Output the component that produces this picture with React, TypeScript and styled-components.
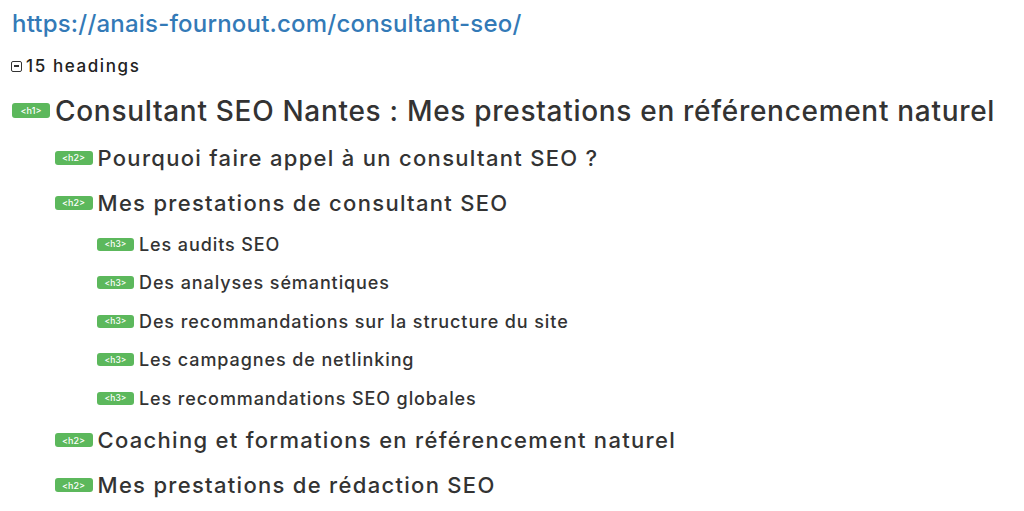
import React from "react";
import styled, { createGlobalStyle } from "styled-components";

const GlobalStyle = createGlobalStyle`
  html, body {
    margin: 0;
    padding: 0;
    background: #fff;
  }
  body {
    font-family: Inter, "Liberation Sans", Arial, sans-serif;
    font-weight: 500;
    color: #333;
  }
`;

const Page = styled.div`
  display: flex;
  flex-direction: column;
  padding: 8px 0 0 12px;
  width: 1024px;
  height: 511px;
  box-sizing: border-box;
  overflow: hidden;
`;

const UrlLink = styled.a`
  display: block;
  font-size: 24px;
  line-height: 32px;
  height: 32px;
  letter-spacing: 0.2px;
  color: #337ab7;
  text-decoration: none;
`;

const Toggle = styled.div`
  display: flex;
  align-items: center;
  gap: 4px;
  height: 40px;
  margin-top: 6px;
  font-size: 17px;
  letter-spacing: 1.6px;
  color: #222;
`;

const ToggleBox = styled.span`
  display: inline-flex;
  align-items: center;
  justify-content: center;
  width: 9px;
  height: 9px;
  border: 1.5px solid #333;
  border-radius: 2px;
  margin-left: -1px;

  &::after {
    content: "";
    width: 5px;
    height: 1.5px;
    background: #333;
  }
`;

const sizes: Record<
  number,
  { font: number; row: number; spacing: number; badgeW: number; badgeH: number; badgeFont: number }
> = {
  1: { font: 28, row: 49, spacing: 0.7, badgeW: 38, badgeH: 15, badgeFont: 9 },
  2: { font: 22, row: 45, spacing: 1.3, badgeW: 38, badgeH: 14, badgeFont: 9 },
  3: { font: 18, row: 38.5, spacing: 0.9, badgeW: 37, badgeH: 13, badgeFont: 8.5 },
};

const Row = styled.div<{ $level: number }>`
  display: flex;
  align-items: center;
  height: ${(p) => sizes[p.$level].row}px;
  padding-left: ${(p) => (p.$level - 1) * 42.5}px;
  font-size: ${(p) => sizes[p.$level].font}px;
  letter-spacing: ${(p) => sizes[p.$level].spacing}px;
  color: #333;
  white-space: nowrap;
`;

const Badge = styled.span<{ $level: number }>`
  display: inline-flex;
  align-items: center;
  justify-content: center;
  flex: none;
  width: ${(p) => sizes[p.$level].badgeW}px;
  height: ${(p) => sizes[p.$level].badgeH}px;
  margin-right: 5px;
  background: #5cb85c;
  border-radius: 3px;
  color: #fff;
  font-size: ${(p) => sizes[p.$level].badgeFont}px;
  letter-spacing: 0;
  line-height: 1;
`;

const headings: [number, string][] = [
  [1, "Consultant SEO Nantes : Mes prestations en référencement naturel"],
  [2, "Pourquoi faire appel à un consultant SEO ?"],
  [2, "Mes prestations de consultant SEO"],
  [3, "Les audits SEO"],
  [3, "Des analyses sémantiques"],
  [3, "Des recommandations sur la structure du site"],
  [3, "Les campagnes de netlinking"],
  [3, "Les recommandations SEO globales"],
  [2, "Coaching et formations en référencement naturel"],
  [2, "Mes prestations de rédaction SEO"],
];

export default function App() {
  return (
    <>
      <GlobalStyle />
      <Page>
        <UrlLink href="#">https://anais-fournout.com/consultant-seo/</UrlLink>
        <Toggle>
          <ToggleBox />
          15 headings
        </Toggle>
        {headings.map(([level, text], i) => (
          <Row key={i} $level={level}>
            <Badge $level={level}>{`<h${level}>`}</Badge>
            {text}
          </Row>
        ))}
      </Page>
    </>
  );
}
